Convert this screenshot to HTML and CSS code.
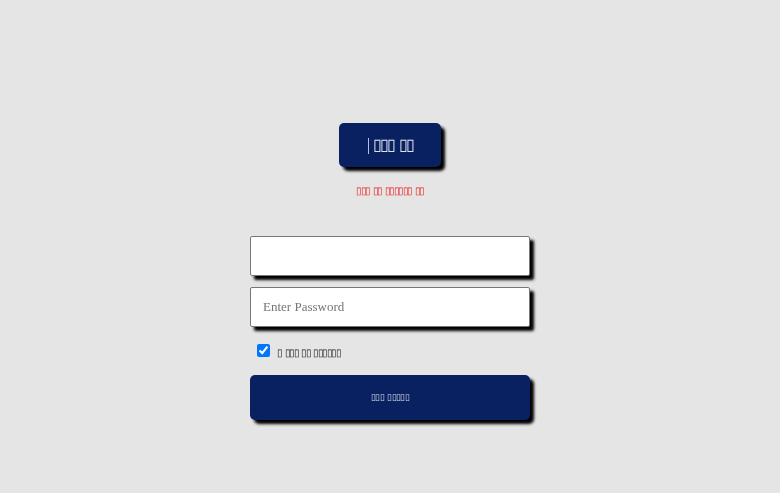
FILE: index.html
```html
<!DOCTYPE html>
<html lang="en">
<head>
  <meta charset="UTF-8">
  <title>Login</title>
  <link rel="stylesheet" href="styles.css">
</head>
<body>
  <div class="login-box">
    <button class="title-btn">| ▯▯▯ ▯▯</button>
    <p class="error">▯▯▯ ▯▯ ▯▯▯▯▯▯ ▯▯</p>
    <form class="login-form">
      <input class="field" type="text">
      <input class="field" type="password" placeholder="Enter Password">
      <label class="remember">
        <input type="checkbox" checked>
        <span>▯ ▯▯▯ ▯▯ ▯▯▯▯▯▯</span>
      </label>
      <button class="submit-btn" type="button">▯▯▯ ▯▯▯▯▯</button>
    </form>
  </div>
</body>
</html>
```

FILE: styles.css
```css
* {
  box-sizing: border-box;
}

body {
  margin: 0;
  height: 493px;
  background: #e5e5e5;
  font-family: "Liberation Serif", serif;
  overflow: hidden;
}

.login-box {
  display: flex;
  flex-direction: column;
  align-items: center;
  padding-top: 123px;
  will-change: transform;
}

.title-btn {
  width: 102px;
  height: 44px;
  padding: 0 6px 2px;
  background: #0a2161;
  color: #dfe3ee;
  border: none;
  border-radius: 5px;
  box-shadow: 4px 4px 3px #000;
  font-family: inherit;
  font-size: 16px;
  letter-spacing: -2px;
  word-spacing: 3px;
}

.error {
  margin: 18px 0 39px;
  color: #ee2222;
  font-size: 10px;
  line-height: 12px;
  letter-spacing: -1.5px;
  word-spacing: 2px;
}

.login-form {
  width: 280px;
  display: flex;
  flex-direction: column;
}

.field {
  width: 100%;
  height: 40px;
  margin-bottom: 11px;
  padding: 0 12px;
  background: #fff;
  border: 1px solid #777;
  border-radius: 2px;
  box-shadow: 4px 4px 3px #000;
  font-family: inherit;
  font-size: 13px;
}

.remember {
  display: flex;
  align-items: center;
  gap: 7px;
  margin: 6px 0 16px 7px;
  height: 15px;
  font-size: 10px;
  letter-spacing: -1.5px;
  word-spacing: 2px;
  color: #222;
}

.remember input {
  width: 13px;
  height: 13px;
  margin: 0 0 2px;
}

.remember span {
  padding-top: 2px;
}

.submit-btn {
  width: 100%;
  height: 45px;
  padding: 0 6px 2px;
  background: #0a2161;
  color: #d5dae8;
  border: none;
  border-radius: 5px;
  box-shadow: 4px 4px 3px #000;
  font-family: inherit;
  font-size: 9px;
  letter-spacing: -0.7px;
  word-spacing: 2px;
}
```
